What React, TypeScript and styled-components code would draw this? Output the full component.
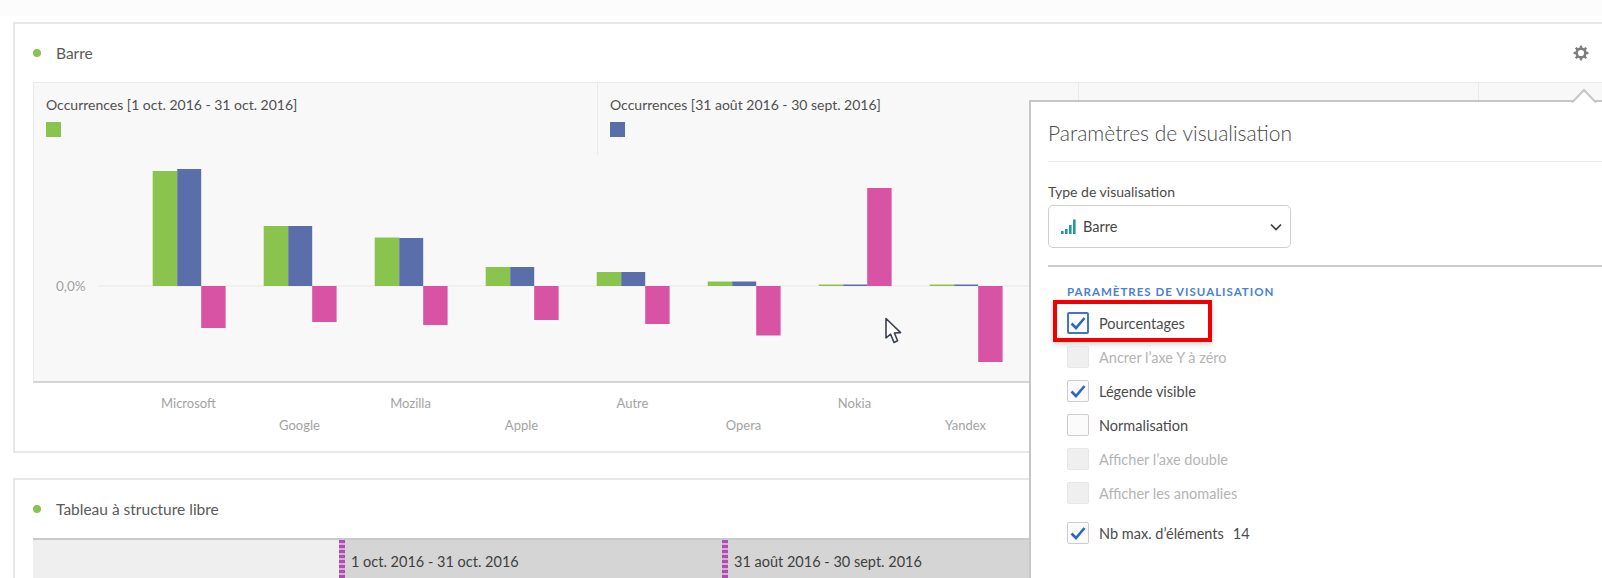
import React from "react";
import styled, { createGlobalStyle } from "styled-components";

const Global = createGlobalStyle`
  html, body { margin: 0; padding: 0; background: #fff; }
  body { font-family: "Lato", "Open Sans", sans-serif; color: #4b4b4b; }
`;

const Page = styled.div`
  position: relative;
  width: 1602px;
  height: 578px;
  overflow: hidden;
  background: #fff;
`;
const TopStrip = styled.div`
  height: 16px;
  margin-bottom: 6px;
  background: #fcfcfc;
`;
const Card = styled.section<{ $height: number; $gap?: number }>`
  box-sizing: border-box;
  width: 1640px;
  height: ${(p) => p.$height}px;
  margin: ${(p) => p.$gap ?? 0}px 0 0 13px;
  border: 2px solid #e8e8e8;
  background: #fff;
`;
const CardHeader = styled.header`
  display: flex;
  align-items: center;
  width: 1574px;
  height: 58px;
  padding-left: 18px;
  box-sizing: border-box;
`;
const Dot = styled.span`
  width: 8px;
  height: 8px;
  border-radius: 50%;
  background: #8bc34f;
  margin-right: 15px;
`;
const CardTitle = styled.h2`
  flex: 1;
  margin: 0;
  font-size: 15.5px;
  font-weight: 400;
  color: #5a5a5a;
`;
const Chart = styled.div`
  box-sizing: border-box;
  margin-left: 18px;
  height: 301px;
  background: #f8f8f8;
  border: 1px solid #e9e9e9;
  border-bottom: 2px solid #d4d4d4;
`;
const LegendRow = styled.div`
  display: flex;
  height: 72px;
`;
const LegendCell = styled.div<{ $width: number }>`
  box-sizing: border-box;
  width: ${(p) => p.$width}px;
  padding: 12px 0 0 12px;
  border-right: 1px solid #e9e9e9;
`;
const LegendLabel = styled.div`
  font-size: 14px;
  line-height: 20px;
  color: #505050;
`;
const Swatch = styled.div<{ $color: string }>`
  width: 15px;
  height: 15px;
  margin-top: 7px;
  background: ${(p) => p.$color};
`;
const Plot = styled.svg`
  display: block;
  font-family: "Lato", sans-serif;
`;
const Axis = styled.div`
  display: grid;
  grid-template-columns: repeat(8, 111px);
  grid-template-rows: 22px 22px;
  margin: 9px 0 0 118px;
`;
const AxisLabel = styled.div<{ $row: number; $col: number }>`
  grid-row: ${(p) => p.$row};
  grid-column: ${(p) => p.$col};
  text-align: center;
  font-size: 13px;
  line-height: 22px;
  color: #a3a3a3;
`;
const Table = styled.div`
  display: flex;
  margin-left: 18px;
  height: 42px;
  border-top: 2px solid #c9c9c9;
`;
const CornerCell = styled.div`
  width: 306px;
  background: #efefef;
`;
const ColumnCell = styled.div`
  display: flex;
  align-items: center;
  width: 383px;
  background: #d5d5d5;
  font-size: 14.5px;
  color: #3f3f3f;
`;
const Handle = styled.span`
  align-self: stretch;
  width: 6px;
  margin-right: 6px;
  background: repeating-linear-gradient(#ad4fb0 0 3px, #d9a9da 3px 5px);
`;

const Popover = styled.aside`
  position: absolute;
  left: 1029px;
  top: 100px;
  width: 620px;
  height: 520px;
  box-sizing: border-box;
  padding: 16px 0 0 17px;
  background: #fff;
  border: 2px solid #c6c6c6;
`;
const Arrow = styled.svg`
  position: absolute;
  left: 540px;
  top: -14px;
`;
const PopTitle = styled.h3`
  margin: 0;
  padding-bottom: 13px;
  font-size: 21px;
  line-height: 30px;
  font-weight: 300;
  color: #4a4a4a;
  border-bottom: 1px solid #ebebeb;
`;
const FieldLabel = styled.div`
  margin-top: 21px;
  font-size: 14px;
  line-height: 18px;
  color: #4b4b4b;
`;
const Select = styled.div`
  box-sizing: border-box;
  display: flex;
  align-items: center;
  gap: 7px;
  width: 243px;
  height: 43px;
  margin-top: 4px;
  padding: 0 7px 0 12px;
  border: 1px solid #cfcfcf;
  border-radius: 5px;
  font-size: 14.5px;
  color: #444;
`;
const SelectText = styled.span`
  flex: 1;
`;
const Divider = styled.div`
  height: 2px;
  margin-top: 17px;
  background: #cccccc;
`;
const SectionHead = styled.div`
  margin: 18px 0 7px 19px;
  font-size: 11.5px;
  line-height: 14px;
  font-weight: 700;
  letter-spacing: 1px;
  color: #4a7fd2;
`;
const Row = styled.div<{ $gap?: number }>`
  position: relative;
  display: flex;
  align-items: center;
  gap: 10px;
  height: 34px;
  margin: ${(p) => p.$gap ?? 0}px 0 0 19px;
`;
const Box = styled.span<{ $state: "focus" | "on" | "off" | "disabled" }>`
  box-sizing: border-box;
  display: flex;
  align-items: center;
  justify-content: center;
  width: 22px;
  height: 22px;
  border-radius: 2px;
  background: ${(p) => (p.$state === "disabled" ? "#efefef" : "#fbfbfb")};
  border: ${(p) =>
    p.$state === "focus"
      ? "2px solid #3f74c6"
      : p.$state === "disabled"
        ? "1px solid #e6e6e6"
        : "1px solid #cdcdcd"};
`;
const RowLabel = styled.span<{ $muted?: boolean }>`
  font-size: 14.5px;
  color: ${(p) => (p.$muted ? "#b4b4b4" : "#4b4b4b")};
`;
const Count = styled.span`
  margin-left: -1px;
  font-size: 14.5px;
  color: #4b4b4b;
`;
const Highlight = styled.div`
  position: absolute;
  left: -14px;
  top: -6px;
  width: 159px;
  height: 42px;
  box-sizing: border-box;
  border: 4px solid #f00000;
  box-shadow: 0 2px 6px rgba(0, 0, 0, 0.2);
`;
const Cursor = styled.svg`
  position: absolute;
  left: 884px;
  top: 317px;
`;

const groups = [
  { g: 115, b: 117, p: -42 },
  { g: 60, b: 60, p: -36 },
  { g: 48.5, b: 48, p: -39 },
  { g: 19, b: 19, p: -34 },
  { g: 14, b: 14, p: -38 },
  { g: 4.5, b: 4.5, p: -49.5 },
  { g: 1.5, b: 1.5, p: 98 },
  { g: 1.5, b: 1.5, p: -76 },
];
const labels = ["Microsoft", "Google", "Mozilla", "Apple", "Autre", "Opera", "Nokia", "Yandex"];

const Check = () => (
  <svg width="16" height="14" viewBox="0 0 16 14">
    <path d="M1.5 7.5 L6 12 L14.5 2" fill="none" stroke="#2c66c6" strokeWidth="2.6" />
  </svg>
);

const Gear = () => (
  <svg width="16" height="16" viewBox="0 0 16 16">
    <circle cx="8" cy="8" r="4.4" fill="none" stroke="#7d7d7d" strokeWidth="2.6" />
    {[0, 45, 90, 135, 180, 225, 270, 315].map((a) => (
      <rect key={a} x="6.8" y="0.6" width="2.4" height="2.6" fill="#7d7d7d" transform={`rotate(${a} 8 8)`} />
    ))}
  </svg>
);

const rows: { label: string; state: "focus" | "on" | "off" | "disabled" }[] = [
  { label: "Pourcentages", state: "focus" },
  { label: "Ancrer l’axe Y à zéro", state: "disabled" },
  { label: "Légende visible", state: "on" },
  { label: "Normalisation", state: "off" },
  { label: "Afficher l’axe double", state: "disabled" },
  { label: "Afficher les anomalies", state: "disabled" },
];

export default function App() {
  const base = 131;
  return (
    <Page>
      <Global />
      <TopStrip />
      <Card $height={431}>
        <CardHeader>
          <Dot />
          <CardTitle>Barre</CardTitle>
          <Gear />
        </CardHeader>
        <Chart>
          <LegendRow>
            <LegendCell $width={564}>
              <LegendLabel>Occurrences [1 oct. 2016 - 31 oct. 2016]</LegendLabel>
              <Swatch $color="#8bc34f" />
            </LegendCell>
            <LegendCell $width={481}>
              <LegendLabel>Occurrences [31 août 2016 - 30 sept. 2016]</LegendLabel>
              <Swatch $color="#5a6eaa" />
            </LegendCell>
            <LegendCell $width={400}>
              <LegendLabel>Pourcentage de variation</LegendLabel>
            </LegendCell>
          </LegendRow>
          <Plot width="1000" height="226" viewBox="0 0 1000 226">
            <line x1="64" x2="1000" y1={base} y2={base} stroke="#e9e9e9" strokeWidth="1" />
            <text x="22" y={base + 5} fontSize="13.5" fill="#a0a0a0">0,0%</text>
            {groups.map((d, i) => {
              const x = 118.7 + i * 111;
              return (
                <g key={labels[i]}>
                  <rect x={x} y={base - d.g} width="24.5" height={d.g} fill="#8bc34f" />
                  <rect x={x + 24.5} y={base - d.b} width="24" height={d.b} fill="#5a6eaa" />
                  <rect
                    x={x + 48.5}
                    y={d.p > 0 ? base - d.p : base}
                    width="24.4"
                    height={Math.abs(d.p)}
                    fill="#d853a3"
                  />
                </g>
              );
            })}
          </Plot>
        </Chart>
        <Axis>
          {labels.map((l, i) => (
            <AxisLabel key={l} $col={i + 1} $row={i % 2 === 0 ? 1 : 2}>
              {l}
            </AxisLabel>
          ))}
        </Axis>
      </Card>
      <Card $height={200} $gap={25}>
        <CardHeader>
          <Dot />
          <CardTitle>Tableau à structure libre</CardTitle>
        </CardHeader>
        <Table>
          <CornerCell />
          <ColumnCell>
            <Handle />1 oct. 2016 - 31 oct. 2016
          </ColumnCell>
          <ColumnCell>
            <Handle />31 août 2016 - 30 sept. 2016
          </ColumnCell>
        </Table>
      </Card>
      <Cursor width="20" height="28" viewBox="0 0 20 28">
        <path
          d="M2 1.5 V21 L6.6 17.2 L10 25.4 L13.6 23.8 L10.4 16 L16.6 15.6 Z"
          fill="#fff"
          stroke="#3a4252"
          strokeWidth="1.6"
          strokeLinejoin="round"
        />
      </Cursor>
      <Popover>
        <Arrow width="30" height="16" viewBox="0 0 30 16">
          <path d="M1 14.5 L13 2 L25 14.5" fill="#fff" stroke="#c6c6c6" strokeWidth="2" />
        </Arrow>
        <PopTitle>Paramètres de visualisation</PopTitle>
        <FieldLabel>Type de visualisation</FieldLabel>
        <Select>
          <svg width="15" height="15" viewBox="0 0 15 15">
            <path d="M0 12h2.6v3H0zM4 10h2.6v5H4zM8 6h2.6v9H8zM12 0.5h2.6V15H12z" fill="#1f9a9c" />
          </svg>
          <SelectText>Barre</SelectText>
          <svg width="14" height="14" viewBox="0 0 14 14">
            <path d="M2 4.5 L7 9.5 L12 4.5" fill="none" stroke="#3c3c3c" strokeWidth="1.7" />
          </svg>
        </Select>
        <Divider />
        <SectionHead>PARAMÈTRES DE VISUALISATION</SectionHead>
        {rows.map((r, i) => (
          <Row key={r.label}>
            <Box $state={r.state}>{(r.state === "focus" || r.state === "on") && <Check />}</Box>
            <RowLabel $muted={r.state === "disabled"}>{r.label}</RowLabel>
            {i === 0 && <Highlight />}
          </Row>
        ))}
        <Row $gap={6}>
          <Box $state="on">
            <Check />
          </Box>
          <RowLabel>Nb max. d’éléments</RowLabel>
          <Count>14</Count>
        </Row>
      </Popover>
    </Page>
  );
}
